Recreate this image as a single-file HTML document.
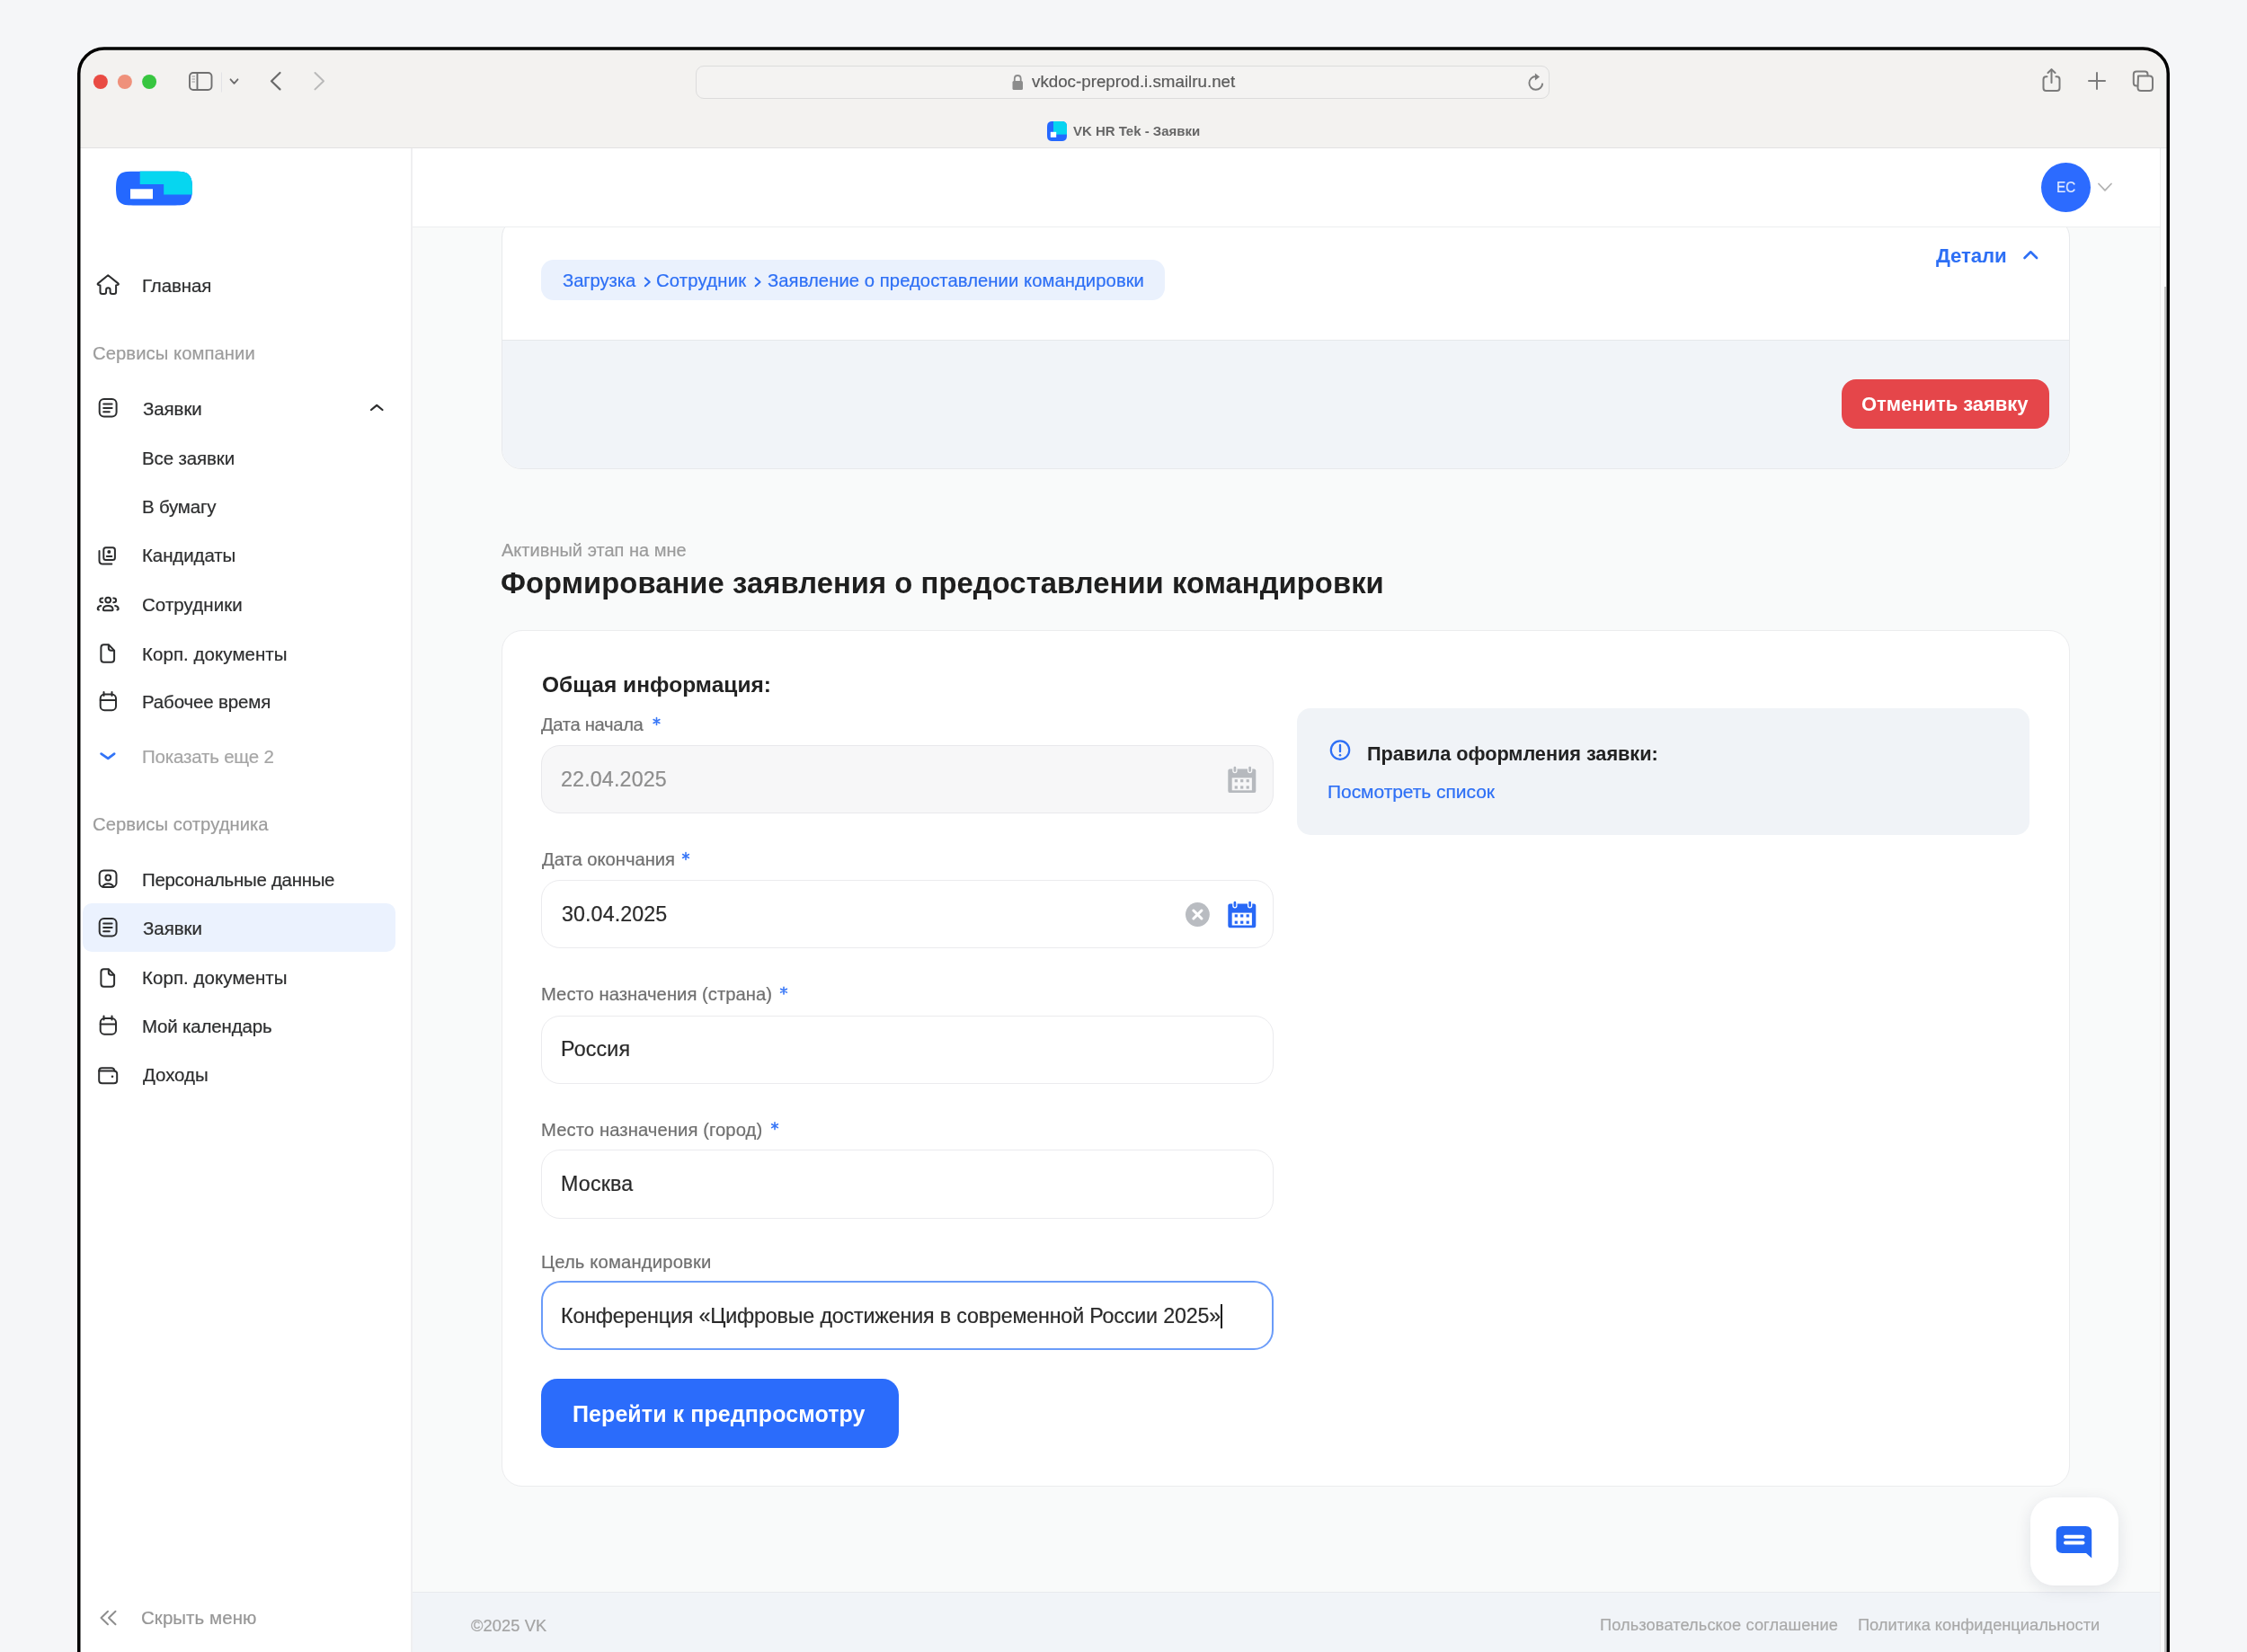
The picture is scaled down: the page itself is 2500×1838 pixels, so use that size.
<!DOCTYPE html>
<html><head><meta charset="utf-8">
<style>
html,body{margin:0;padding:0}
body{width:2500px;height:1838px;overflow:hidden;position:relative;background:#f5f6f8;font-family:"Liberation Sans",sans-serif}
.a{position:absolute;box-sizing:border-box}
.t{position:absolute;white-space:nowrap;line-height:1;font-family:"Liberation Sans",sans-serif;will-change:transform}
.t[style*="font-weight:400"]{-webkit-text-stroke:0.2px currentColor}
svg.ov{position:absolute;left:0;top:0}
</style></head><body>
<!-- toolbar -->
<div class="a" style="left:86px;top:52px;width:2328px;height:113px;background:#f3f2f0;border-radius:30px 30px 0 0"></div>
<div class="a" style="left:88px;top:164px;width:2324px;height:1px;background:#e2e2e2"></div>
<!-- url bar -->
<div class="a" style="left:774px;top:73px;width:950px;height:37px;border:1px solid #dcdcdc;border-radius:9px;background:#f4f3f2"></div>
<!-- sidebar -->
<div class="a" style="left:88px;top:165px;width:369px;height:1700px;background:#ffffff"></div>
<div class="a" style="left:457px;top:165px;width:2px;height:1700px;background:#efeff1"></div>
<div class="a" style="left:92px;top:1005px;width:348px;height:54px;background:#ebf2fe;border-radius:10px"></div>
<!-- main bg -->
<div class="a" style="left:459px;top:165px;width:1944px;height:1606px;background:#f9fafa"></div>
<!-- card 1 -->
<div class="a" style="left:558px;top:242px;width:1745px;height:280px;border:1px solid #e7e9ec;border-radius:22px;background:#fff;overflow:hidden">
  <div class="a" style="left:0;top:135px;width:100%;height:150px;background:#f1f4f8;border-top:1px solid #e6e8eb"></div>
</div>
<div class="a" style="left:602px;top:289px;width:694px;height:45px;background:#eaf1fd;border-radius:14px"></div>
<div class="a" style="left:2049px;top:422px;width:231px;height:55px;background:#e5464a;border-radius:16px"></div>
<!-- header (over card top) -->
<div class="a" style="left:459px;top:165px;width:1944px;height:88px;background:#fff;border-bottom:1px solid #eceef0"></div>
<!-- scrollbar strip -->
<div class="a" style="left:2403px;top:165px;width:8px;height:1700px;background:#fafafa;border-left:1px solid #ececec"></div>
<div class="a" style="left:2408px;top:319px;width:2px;height:1600px;background:#c4c4c4"></div>
<!-- card 2 -->
<div class="a" style="left:558px;top:701px;width:1745px;height:953px;border:1px solid #ebecee;border-radius:23px;background:#fff"></div>
<div class="a" style="left:602px;top:829px;width:815px;height:76px;border:1px solid #e9e9ec;border-radius:21px;background:#f7f7f8"></div>
<div class="a" style="left:602px;top:979px;width:815px;height:76px;border:1px solid #ebebee;border-radius:21px;background:#fff"></div>
<div class="a" style="left:602px;top:1130px;width:815px;height:76px;border:1px solid #ebebee;border-radius:21px;background:#fff"></div>
<div class="a" style="left:602px;top:1279px;width:815px;height:77px;border:1px solid #ebebee;border-radius:21px;background:#fff"></div>
<div class="a" style="left:602px;top:1425px;width:815px;height:77px;border:2px solid #6b9cf9;border-radius:22px;background:#fff"></div>
<div class="a" style="left:1358px;top:1451px;width:2px;height:27px;background:#1a1a1a"></div>
<div class="a" style="left:602px;top:1534px;width:398px;height:77px;background:#2b6cfb;border-radius:18px"></div>
<div class="a" style="left:1443px;top:788px;width:815px;height:141px;background:#f0f3f7;border-radius:15px"></div>
<!-- footer -->
<div class="a" style="left:459px;top:1771px;width:1944px;height:80px;background:#f1f4f8;border-top:1px solid #e8eaee"></div>
<!-- chat button -->
<div class="a" style="left:2259px;top:1666px;width:98px;height:98px;background:#fff;border-radius:26px;box-shadow:0 4px 18px rgba(20,30,60,0.10)"></div>
<!-- avatar -->
<div class="a" style="left:2271px;top:180.5px;width:55px;height:55px;background:#2c6bff;border-radius:50%"></div>

<svg class="ov" width="2500" height="1838" viewBox="0 0 2500 1838">
 <!-- traffic lights -->
 <circle cx="111.9" cy="91" r="8" fill="#e94b43"/>
 <circle cx="138.9" cy="91" r="8" fill="#ef917b"/>
 <circle cx="166.1" cy="91" r="8" fill="#37c640"/>
 <!-- sidebar toggle -->
 <g fill="none" stroke="#707070" stroke-width="1.9">
  <rect x="211" y="81" width="24.5" height="19" rx="4"/>
  <line x1="219.5" y1="81" x2="219.5" y2="100"/>
 </g>
 <g stroke="#9a9a9a" stroke-width="1"><line x1="213.5" y1="85" x2="217" y2="85"/><line x1="213.5" y1="88" x2="217" y2="88"/><line x1="213.5" y1="91" x2="217" y2="91"/></g>
 <line x1="246.5" y1="80.5" x2="246.5" y2="102.5" stroke="#e2e2e6" stroke-width="1"/>
 <polyline points="256.5,88.3 260.5,92.8 264.5,88.3" fill="none" stroke="#6c6c6c" stroke-width="1.8" stroke-linecap="round" stroke-linejoin="round"/>
 <polyline points="311.5,81 302,90.2 311.5,99.4" fill="none" stroke="#6a6a6a" stroke-width="2.2" stroke-linecap="round" stroke-linejoin="round"/>
 <polyline points="350.5,81 360,90.2 350.5,99.4" fill="none" stroke="#b9b9b9" stroke-width="2" stroke-linecap="round" stroke-linejoin="round"/>
 <!-- lock -->
 <g fill="#8c8c8c"><rect x="1126.5" y="90" width="11.5" height="10" rx="1.5"/></g>
 <path d="M1128.8 90.5 V87.5 Q1128.8 84 1132.2 84 Q1135.7 84 1135.7 87.5 V90.5" fill="none" stroke="#8c8c8c" stroke-width="1.8"/>
 <!-- refresh -->
 <path d="M1716.2 92.6 A7.4 7.4 0 1 1 1708.9 85" fill="none" stroke="#7d7d7d" stroke-width="1.9"/>
 <path d="M1707.9 81.4 L1713 85.4 L1707.9 89.6 Z" fill="#7d7d7d"/>
 <!-- share / plus / tabs -->
 <g fill="none" stroke="#7b7b7b" stroke-width="2" stroke-linecap="round" stroke-linejoin="round">
  <path d="M2277.5 85.3 H2276.5 Q2273.5 85.3 2273.5 88.3 V98 Q2273.5 101 2276.5 101 H2288.5 Q2291.5 101 2291.5 98 V88.3 Q2291.5 85.3 2288.5 85.3 H2287.5"/>
  <line x1="2282.5" y1="92" x2="2282.5" y2="77.5"/>
  <polyline points="2278.5,81 2282.5,77.3 2286.5,81"/>
  <line x1="2324" y1="90" x2="2342" y2="90"/>
  <line x1="2333" y1="81" x2="2333" y2="99"/>
  <path d="M2379 84.5 H2391.5 Q2395 84.5 2395 88 V97.5 Q2395 101 2391.5 101 H2382 Q2378.5 101 2378.5 97.5 Z"/>
  <path d="M2378.3 95.5 H2377 Q2373.8 95.5 2373.8 92.3 V82.8 Q2373.8 79.6 2377 79.6 H2386.3 Q2389.5 79.6 2389.5 82.8 V84.3"/>
 </g>
 <!-- favicon -->
 <defs>
  <clipPath id="fav"><path d="M1172 135 H1180 C1185.5 135 1187 136.5 1187 142 V150 C1187 155.5 1185.5 157 1180 157 H1172 C1166.5 157 1165 155.5 1165 150 V142 C1165 136.5 1166.5 135 1172 135 Z"/></clipPath>
  <clipPath id="logo"><path d="M148 190.5 H195 C209 190.5 214 193.5 214 209.6 C214 225.7 209 228.7 195 228.7 H148 C134 228.7 129 225.7 129 209.6 C129 193.5 134 190.5 148 190.5 Z"/></clipPath>
 </defs>
 <g clip-path="url(#fav)">
  <rect x="1165" y="135" width="22" height="22" fill="#2468ff"/>
  <rect x="1172" y="135" width="15" height="14.6" fill="#06d4f0"/>
  <rect x="1168.8" y="146.8" width="6.4" height="6" fill="#fff"/>
 </g>
 <!-- logo -->
 <g clip-path="url(#logo)">
  <rect x="129" y="190.5" width="85" height="38.2" fill="#2468ff"/>
  <path d="M155.7 190 H215 V216.5 H182.2 V205 H155.7 Z" fill="#06d6f0"/>
  <rect x="145" y="210.3" width="25" height="11" fill="#fff"/>
 </g>
 <!-- sidebar icons -->
 <g fill="none" stroke="#2c2d2e" stroke-width="2" stroke-linecap="round" stroke-linejoin="round">
  <g transform="translate(100,295)">
   <path d="M20.2 11.3 L9 20.4 Q8.1 21.4 9.3 21.9 L11.5 22.4 V29.7 Q11.5 32 13.8 32 H15.9 Q18.1 32 18.1 29.7 V27.4 Q18.1 25.2 20.3 25.2 Q22.6 25.2 22.6 27.4 V29.7 Q22.6 32 24.8 32 H26.9 Q29.1 32 29.1 29.7 V22.4 L31.2 21.9 Q32.4 21.4 31.5 20.4 Z"/>
  </g>
  <g transform="translate(100,435)">
   <rect x="10.7" y="9" width="18.9" height="19.4" rx="5"/>
   <line x1="15.2" y1="14.4" x2="24.6" y2="14.4"/><line x1="15.2" y1="19" x2="24.6" y2="19"/><line x1="15.2" y1="23.3" x2="21.8" y2="23.3"/>
  </g>
  <g transform="translate(100,598)">
   <rect x="15.3" y="11.2" width="12.6" height="13.9" rx="2.5"/>
   <line x1="18.8" y1="21" x2="24.3" y2="21"/>
   <path d="M10.5 15 V25.8 Q10.5 29.6 14.3 29.6 H24.3"/>
  </g>
  <g transform="translate(100,652)">
   <circle cx="20.2" cy="15.6" r="2.9"/>
   <path d="M14.2 13.6 Q11.3 13.6 11.3 15.9 Q11.3 18.2 14.2 18.2"/>
   <path d="M26.2 13.6 Q29.1 13.6 29.1 15.9 Q29.1 18.2 26.2 18.2"/>
   <path d="M14.8 26.3 Q14.8 22 20.2 22 Q25.6 22 25.6 26.3 Q25.6 27.3 24.6 27.3 H15.8 Q14.8 27.3 14.8 26.3 Z"/>
   <path d="M12.3 21.9 Q8.7 22.5 8.7 25.4 Q8.7 26.3 9.9 26.5"/>
   <path d="M28.1 21.9 Q31.7 22.5 31.7 25.4 Q31.7 26.3 30.5 26.5"/>
  </g>
 </g>
 <g fill="#2c2d2e"><circle cx="121.3" cy="614" r="2"/></g>
 <g fill="none" stroke="#2c2d2e" stroke-width="2" stroke-linecap="round" stroke-linejoin="round">
  <g transform="translate(100,707)">
   <path d="M20.8 10.2 H15.6 Q12.4 10.2 12.4 13.4 V26.5 Q12.4 29.7 15.6 29.7 H23.9 Q27.1 29.7 27.1 26.5 V16.6 Z"/>
   <path d="M20.8 10.8 V14 Q20.8 16.8 23.6 16.8 H26.6"/>
  </g>
  <g transform="translate(100,760)">
   <rect x="11.7" y="12.6" width="17.3" height="17.6" rx="4.5"/>
   <line x1="11.7" y1="19" x2="29" y2="19"/>
   <line x1="15.5" y1="10" x2="15.5" y2="14"/><line x1="24.5" y1="10" x2="24.5" y2="14"/>
  </g>
  <g transform="translate(100,957)">
   <rect x="10.7" y="11.4" width="18.8" height="18.6" rx="4.8"/>
   <circle cx="20.3" cy="19.5" r="2.9"/>
   <path d="M14.3 29.6 Q15.8 26.3 20.3 26.3 Q24.8 26.3 26.3 29.6"/>
  </g>
  <g transform="translate(100,1013)">
   <rect x="10.7" y="9" width="18.9" height="19.4" rx="5"/>
   <line x1="15.2" y1="14.4" x2="24.6" y2="14.4"/><line x1="15.2" y1="19" x2="24.6" y2="19"/><line x1="15.2" y1="23.3" x2="21.8" y2="23.3"/>
  </g>
  <g transform="translate(100,1068)">
   <path d="M20.8 10.2 H15.6 Q12.4 10.2 12.4 13.4 V26.5 Q12.4 29.7 15.6 29.7 H23.9 Q27.1 29.7 27.1 26.5 V16.6 Z"/>
   <path d="M20.8 10.8 V14 Q20.8 16.8 23.6 16.8 H26.6"/>
  </g>
  <g transform="translate(100,1120.5)">
   <rect x="11.7" y="12.6" width="17.3" height="17.6" rx="4.5"/>
   <line x1="11.7" y1="19" x2="29" y2="19"/>
   <line x1="15.5" y1="10" x2="15.5" y2="14"/><line x1="24.5" y1="10" x2="24.5" y2="14"/>
  </g>
  <g transform="translate(100,1177)">
   <path d="M10.2 14.5 V24.7 Q10.2 28.2 13.7 28.2 H26.7 Q30.2 28.2 30.2 24.7 V18 Q30.2 14.5 26.7 14.5 Z"/>
   <path d="M10.2 14.5 Q10.2 11.2 13.5 11.2 H24 Q27 11.2 27.4 14.5"/>
  </g>
  <polyline points="413,456 419.2,450.8 425.5,456" stroke-width="2.2"/>
  <polyline points="120,1792.8 112.5,1800 120,1807.2" stroke="#8e8e8e"/>
  <polyline points="128.5,1792.8 121,1800 128.5,1807.2" stroke="#8e8e8e"/>
 </g>
 <circle cx="125" cy="1197.8" r="1.3" fill="#2c2d2e"/>
 <polyline points="112.6,838.6 120.2,843.9 127.2,838.6" fill="none" stroke="#3274f7" stroke-width="2.7" stroke-linecap="round" stroke-linejoin="round"/>
 <polyline points="717.8,309.3 722.8,313.8 717.8,318.3" fill="none" stroke="#2d6ff5" stroke-width="2" stroke-linecap="round" stroke-linejoin="round"/>
 <polyline points="840.6,309.3 845.6,313.8 840.6,318.3" fill="none" stroke="#2d6ff5" stroke-width="2" stroke-linecap="round" stroke-linejoin="round"/>
 <!-- Детали chevron -->
 <polyline points="2252.5,287 2259.3,280.3 2266.1,287" fill="none" stroke="#2d6ff5" stroke-width="2.6" stroke-linecap="round" stroke-linejoin="round"/>
 <!-- avatar chevron -->
 <polyline points="2335,204.5 2342,211.8 2349,204.5" fill="none" stroke="#b3b3b3" stroke-width="1.8" stroke-linecap="round" stroke-linejoin="round"/>
 <!-- calendar icons -->
 <g transform="translate(1366.3,851.8)">
  <rect x="0" y="3.6" width="31" height="26.7" rx="2.2" fill="#b6b9be"/>
  <rect x="4.4" y="13.6" width="22.2" height="13.9" fill="#f7f7f8"/>
  <g fill="#b6b9be"><rect x="7.4" y="15.3" width="3.2" height="3.2"/><rect x="13.8" y="15.3" width="3.2" height="3.2"/><rect x="20.3" y="15.3" width="3.2" height="3.2"/><rect x="7.4" y="22.6" width="3.2" height="3.2"/><rect x="13.8" y="22.6" width="3.2" height="3.2"/><rect x="20.3" y="22.6" width="3.2" height="3.2"/></g>
  <rect x="5.6" y="0.2" width="4" height="7.6" rx="2" fill="#b6b9be" stroke="#f7f7f8" stroke-width="1.3"/>
  <rect x="22.3" y="0.2" width="4" height="7.6" rx="2" fill="#b6b9be" stroke="#f7f7f8" stroke-width="1.3"/>
 </g>
 <g transform="translate(1366.3,1002)">
  <rect x="0" y="3.6" width="31" height="26.7" rx="2.2" fill="#2868f6"/>
  <rect x="4.4" y="13.6" width="22.2" height="13.9" fill="#ffffff"/>
  <g fill="#2868f6"><rect x="7.4" y="15.3" width="3.2" height="3.2"/><rect x="13.8" y="15.3" width="3.2" height="3.2"/><rect x="20.3" y="15.3" width="3.2" height="3.2"/><rect x="7.4" y="22.6" width="3.2" height="3.2"/><rect x="13.8" y="22.6" width="3.2" height="3.2"/><rect x="20.3" y="22.6" width="3.2" height="3.2"/></g>
  <rect x="5.6" y="0.2" width="4" height="7.6" rx="2" fill="#2868f6" stroke="#ffffff" stroke-width="1.3"/>
  <rect x="22.3" y="0.2" width="4" height="7.6" rx="2" fill="#2868f6" stroke="#ffffff" stroke-width="1.3"/>
 </g>
 <!-- clear icon -->
 <circle cx="1332.4" cy="1017.5" r="13.4" fill="#b9bcc1"/>
 <g stroke="#fff" stroke-width="3" stroke-linecap="round"><line x1="1327.9" y1="1013" x2="1336.9" y2="1022"/><line x1="1336.9" y1="1013" x2="1327.9" y2="1022"/></g>
 <!-- info icon -->
 <circle cx="1491" cy="834.6" r="10.2" fill="none" stroke="#2d6ff5" stroke-width="2.2"/>
 <line x1="1491" y1="829" x2="1491" y2="836.2" stroke="#2d6ff5" stroke-width="2.3" stroke-linecap="round"/>
 <circle cx="1491" cy="840.3" r="1.3" fill="#2d6ff5"/>
 <!-- asterisks -->
 <g fill="none" stroke="#3a78f7" stroke-width="1.6" stroke-linecap="round">
  <path d="M0 -3.9 V3.9 M-3.4 -1.95 L3.4 1.95 M-3.4 1.95 L3.4 -1.95" transform="translate(730.5,802.5)"/>
  <path d="M0 -3.9 V3.9 M-3.4 -1.95 L3.4 1.95 M-3.4 1.95 L3.4 -1.95" transform="translate(763,952.5)"/>
  <path d="M0 -3.9 V3.9 M-3.4 -1.95 L3.4 1.95 M-3.4 1.95 L3.4 -1.95" transform="translate(872,1102.2)"/>
  <path d="M0 -3.9 V3.9 M-3.4 -1.95 L3.4 1.95 M-3.4 1.95 L3.4 -1.95" transform="translate(862,1252.7)"/>
 </g>
 <!-- chat icon -->
 <path d="M2294.5 1698 H2320.5 Q2327.2 1698 2327.2 1704.5 V1733.5 L2321 1728 H2294.5 Q2287.7 1728 2287.7 1721.3 V1704.7 Q2287.7 1698 2294.5 1698 Z" fill="#2468f6"/>
 <g stroke="#fff" stroke-width="4" stroke-linecap="round"><line x1="2298" y1="1709.8" x2="2317.5" y2="1709.8"/><line x1="2298" y1="1716.4" x2="2317.5" y2="1716.4"/></g>
 <!-- window frame -->
 <rect x="87.75" y="54" width="2324.5" height="2000" rx="28" fill="none" stroke="#000" stroke-width="3.5"/>
</svg>
<div class="t" style="left:1148.00px;top:82.40px;font-size:18.75px;font-weight:400;color:#5a5a5a;letter-spacing:0.003px;">vkdoc-preprod.i.smailru.net</div>
<div class="t" style="left:1194.00px;top:137.80px;font-size:15px;font-weight:700;color:#666666;letter-spacing:-0.007px;">VK HR Tek - Заявки</div>
<div class="t" style="left:157.50px;top:307.80px;font-size:20.5px;font-weight:400;color:#2c2d2e;letter-spacing:-0.104px;">Главная</div>
<div class="t" style="left:103.40px;top:383.40px;font-size:20.25px;font-weight:400;color:#9c9c9c;letter-spacing:0.059px;">Сервисы компании</div>
<div class="t" style="left:158.60px;top:444.50px;font-size:20.5px;font-weight:400;color:#2c2d2e;letter-spacing:-0.089px;">Заявки</div>
<div class="t" style="left:157.60px;top:499.60px;font-size:20.5px;font-weight:400;color:#2c2d2e;letter-spacing:-0.120px;">Все заявки</div>
<div class="t" style="left:157.60px;top:553.80px;font-size:20.5px;font-weight:400;color:#2c2d2e;letter-spacing:-0.207px;">В бумагу</div>
<div class="t" style="left:157.60px;top:608.00px;font-size:20.5px;font-weight:400;color:#2c2d2e;letter-spacing:-0.097px;">Кандидаты</div>
<div class="t" style="left:157.60px;top:663.20px;font-size:20.5px;font-weight:400;color:#2c2d2e;letter-spacing:0.068px;">Сотрудники</div>
<div class="t" style="left:157.50px;top:717.80px;font-size:20.5px;font-weight:400;color:#2c2d2e;letter-spacing:0.056px;">Корп. документы</div>
<div class="t" style="left:157.50px;top:771.00px;font-size:20.5px;font-weight:400;color:#2c2d2e;letter-spacing:-0.154px;">Рабочее время</div>
<div class="t" style="left:157.50px;top:832.00px;font-size:20.5px;font-weight:400;color:#a5a5a5;letter-spacing:-0.190px;">Показать еще 2</div>
<div class="t" style="left:103.40px;top:907.20px;font-size:20.25px;font-weight:400;color:#9c9c9c;letter-spacing:0.014px;">Сервисы сотрудника</div>
<div class="t" style="left:157.50px;top:968.50px;font-size:20.5px;font-weight:400;color:#2c2d2e;letter-spacing:-0.310px;">Персональные данные</div>
<div class="t" style="left:158.50px;top:1022.60px;font-size:20.5px;font-weight:400;color:#2c2d2e;letter-spacing:-0.069px;">Заявки</div>
<div class="t" style="left:157.50px;top:1077.60px;font-size:20.5px;font-weight:400;color:#2c2d2e;letter-spacing:0.056px;">Корп. документы</div>
<div class="t" style="left:157.50px;top:1131.70px;font-size:20.5px;font-weight:400;color:#2c2d2e;letter-spacing:-0.185px;">Мой календарь</div>
<div class="t" style="left:158.50px;top:1185.80px;font-size:20.5px;font-weight:400;color:#2c2d2e;letter-spacing:-0.063px;">Доходы</div>
<div class="t" style="left:157.00px;top:1789.80px;font-size:20.5px;font-weight:400;color:#969696;letter-spacing:0.051px;">Скрыть меню</div>
<div class="t" style="left:626.00px;top:301.70px;font-size:20.25px;font-weight:400;color:#2d6ff5;letter-spacing:-0.090px;">Загрузка</div>
<div class="t" style="left:730.30px;top:301.70px;font-size:20.25px;font-weight:400;color:#2d6ff5;letter-spacing:0.211px;">Сотрудник</div>
<div class="t" style="left:854.00px;top:301.70px;font-size:20.25px;font-weight:400;color:#2d6ff5;letter-spacing:0.057px;">Заявление о предоставлении командировки</div>
<div class="t" style="left:2154.40px;top:273.80px;font-size:22.25px;font-weight:700;color:#2d6ff5;letter-spacing:-0.102px;">Детали</div>
<div class="t" style="left:2070.80px;top:439.00px;font-size:22.0px;font-weight:700;color:#ffffff;letter-spacing:-0.048px;">Отменить заявку</div>
<div class="t" style="left:558.40px;top:601.70px;font-size:20.0px;font-weight:400;color:#9a9a9a;letter-spacing:0.024px;">Активный этап на мне</div>
<div class="t" style="left:557.40px;top:633.00px;font-size:32.75px;font-weight:700;color:#1f1f1f;letter-spacing:0.075px;">Формирование заявления о предоставлении командировки</div>
<div class="t" style="left:602.50px;top:750.00px;font-size:24.5px;font-weight:700;color:#222222;letter-spacing:0.030px;">Общая информация:</div>
<div class="t" style="left:602.40px;top:796.10px;font-size:20.25px;font-weight:400;color:#6f6f6f;letter-spacing:-0.349px;">Дата начала</div>
<div class="t" style="left:624.20px;top:856.20px;font-size:23.25px;font-weight:400;color:#8d8d8d;letter-spacing:0.152px;">22.04.2025</div>
<div class="t" style="left:602.70px;top:945.70px;font-size:20.25px;font-weight:400;color:#6f6f6f;letter-spacing:-0.036px;">Дата окончания</div>
<div class="t" style="left:625.40px;top:1006.30px;font-size:23.25px;font-weight:400;color:#2a2a2a;letter-spacing:0.096px;">30.04.2025</div>
<div class="t" style="left:601.70px;top:1095.50px;font-size:20.25px;font-weight:400;color:#6f6f6f;letter-spacing:0.011px;">Место назначения (страна)</div>
<div class="t" style="left:624.40px;top:1156.20px;font-size:23.25px;font-weight:400;color:#2a2a2a;letter-spacing:0.169px;">Россия</div>
<div class="t" style="left:601.80px;top:1246.80px;font-size:20.25px;font-weight:400;color:#6f6f6f;letter-spacing:0.080px;">Место назначения (город)</div>
<div class="t" style="left:623.70px;top:1306.00px;font-size:23.25px;font-weight:400;color:#2a2a2a;letter-spacing:0.171px;">Москва</div>
<div class="t" style="left:601.80px;top:1393.70px;font-size:20.25px;font-weight:400;color:#6f6f6f;letter-spacing:0.153px;">Цель командировки</div>
<div class="t" style="left:623.70px;top:1452.80px;font-size:23.25px;font-weight:400;color:#2a2a2a;letter-spacing:-0.163px;">Конференция «Цифровые достижения в современной России 2025»</div>
<div class="t" style="left:637.00px;top:1561.00px;font-size:25.0px;font-weight:700;color:#ffffff;letter-spacing:0.078px;">Перейти к предпросмотру</div>
<div class="t" style="left:1520.50px;top:827.80px;font-size:21.75px;font-weight:700;color:#222222;letter-spacing:-0.057px;">Правила оформления заявки:</div>
<div class="t" style="left:1476.70px;top:869.50px;font-size:21.0px;font-weight:400;color:#2d6ff5;letter-spacing:-0.051px;">Посмотреть список</div>
<div class="t" style="left:2287.50px;top:199.80px;font-size:17px;font-weight:400;color:#e8efff;letter-spacing:-0.039px;transform:scaleX(0.9);transform-origin:0 0">EC</div>
<div class="t" style="left:524.00px;top:1800.00px;font-size:18.25px;font-weight:400;color:#a3a3a3;letter-spacing:0.102px;">©2025 VK</div>
<div class="t" style="left:1780.40px;top:1799.00px;font-size:18.25px;font-weight:400;color:#a9a9a9;letter-spacing:0.080px;">Пользовательское соглашение</div>
<div class="t" style="left:2067.40px;top:1799.00px;font-size:18.25px;font-weight:400;color:#a9a9a9;letter-spacing:-0.001px;">Политика конфиденциальности</div>
</body></html>
